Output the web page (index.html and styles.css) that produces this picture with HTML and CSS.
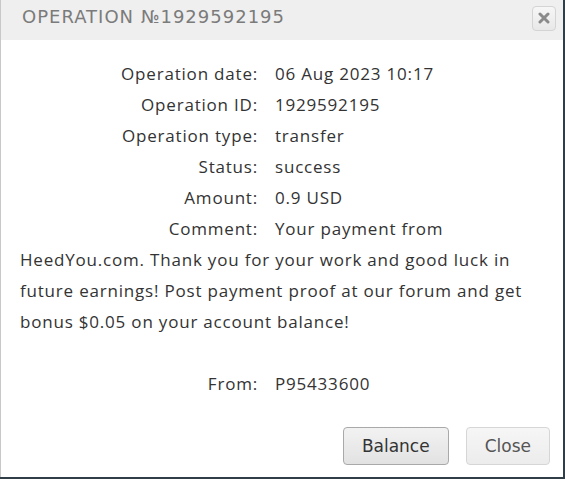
FILE: index.html
```html
<!DOCTYPE html>
<html lang="en">
<head>
    <meta charset="UTF-8">
    <title>Operation 1929592195</title>
    <link rel="stylesheet" href="styles.css">
</head>
<body>
    <div class="dialog">
        <div class="dialog-head">
            <span class="dialog-title">OPERATION №1929592195</span>
            <button class="dialog-x" title="Close">
                <svg width="12" height="12" viewBox="0 0 12 12"><path d="M2 2 L10 10 M10 2 L2 10" stroke="#8a8a8a" stroke-width="3" stroke-linecap="round"/></svg>
            </button>
        </div>
        <div class="dialog-body">
            <div class="row"><span class="lbl">Operation date:</span>06 Aug 2023 10:17</div>
            <div class="row"><span class="lbl">Operation ID:</span>1929592195</div>
            <div class="row"><span class="lbl">Operation type:</span>transfer</div>
            <div class="row"><span class="lbl">Status:</span>success</div>
            <div class="row"><span class="lbl">Amount:</span>0.9 USD</div>
            <div class="row"><span class="lbl">Comment:</span>Your payment from HeedYou.com. Thank you for your work and good luck in future earnings! Post payment proof at our forum and get bonus $0.05 on your account balance!</div>
            <div class="row gap"><span class="lbl">From:</span>P95433600</div>
        </div>
        <div class="dialog-foot">
            <button class="btn">Balance</button>
            <button class="btn btn-light">Close</button>
        </div>
    </div>
</body>
</html>
```

FILE: styles.css
```css
body {
    margin: 0;
    background: #2f3e47;
}
.dialog {
    width: 562px;
    height: 477px;
    background: #fff;
    border-left: 1px solid #c8c8c8;
    display: flex;
    flex-direction: column;
}
.dialog-head {
    height: 40px;
    background: #efefef;
    display: flex;
    align-items: center;
    justify-content: space-between;
    padding: 0 7px 0 21px;
}
.dialog-title {
    font-family: "DejaVu Sans", sans-serif;
    font-size: 18px;
    letter-spacing: 1px;
    color: #7b7b7b;
    margin-top: -7px;
}
.dialog-x {
    width: 24px;
    height: 25px;
    border: 1px solid #d4d4d4;
    border-radius: 4px;
    background: linear-gradient(#f6f6f6, #e8e8e8);
    padding: 0;
    display: flex;
    align-items: center;
    justify-content: center;
    margin-top: -4px;
}
.dialog-body {
    flex: 1;
    padding: 18px 20px 0 19px;
    font-family: "Open Sans", sans-serif;
    font-size: 17px;
    letter-spacing: 0.8px;
    line-height: 31px;
    color: #333;
}
.lbl {
    display: inline-block;
    width: 238px;
    padding-right: 17px;
    text-align: right;
}
.gap {
    margin-top: 31px;
}
.dialog-foot {
    display: flex;
    justify-content: flex-end;
    gap: 17px;
    padding: 0 13px 12px 0;
}
.btn {
    height: 38px;
    padding: 0 18px;
    font-family: "DejaVu Sans", sans-serif;
    font-size: 17px;
    color: #333;
    background: linear-gradient(#f2f2f2, #e2e2e2);
    border: 1px solid #a9a9a9;
    border-radius: 4px;
}
.btn-light {
    color: #555;
    border-color: #d6d6d6;
    background: linear-gradient(#f6f6f6, #ececec);
}
```
